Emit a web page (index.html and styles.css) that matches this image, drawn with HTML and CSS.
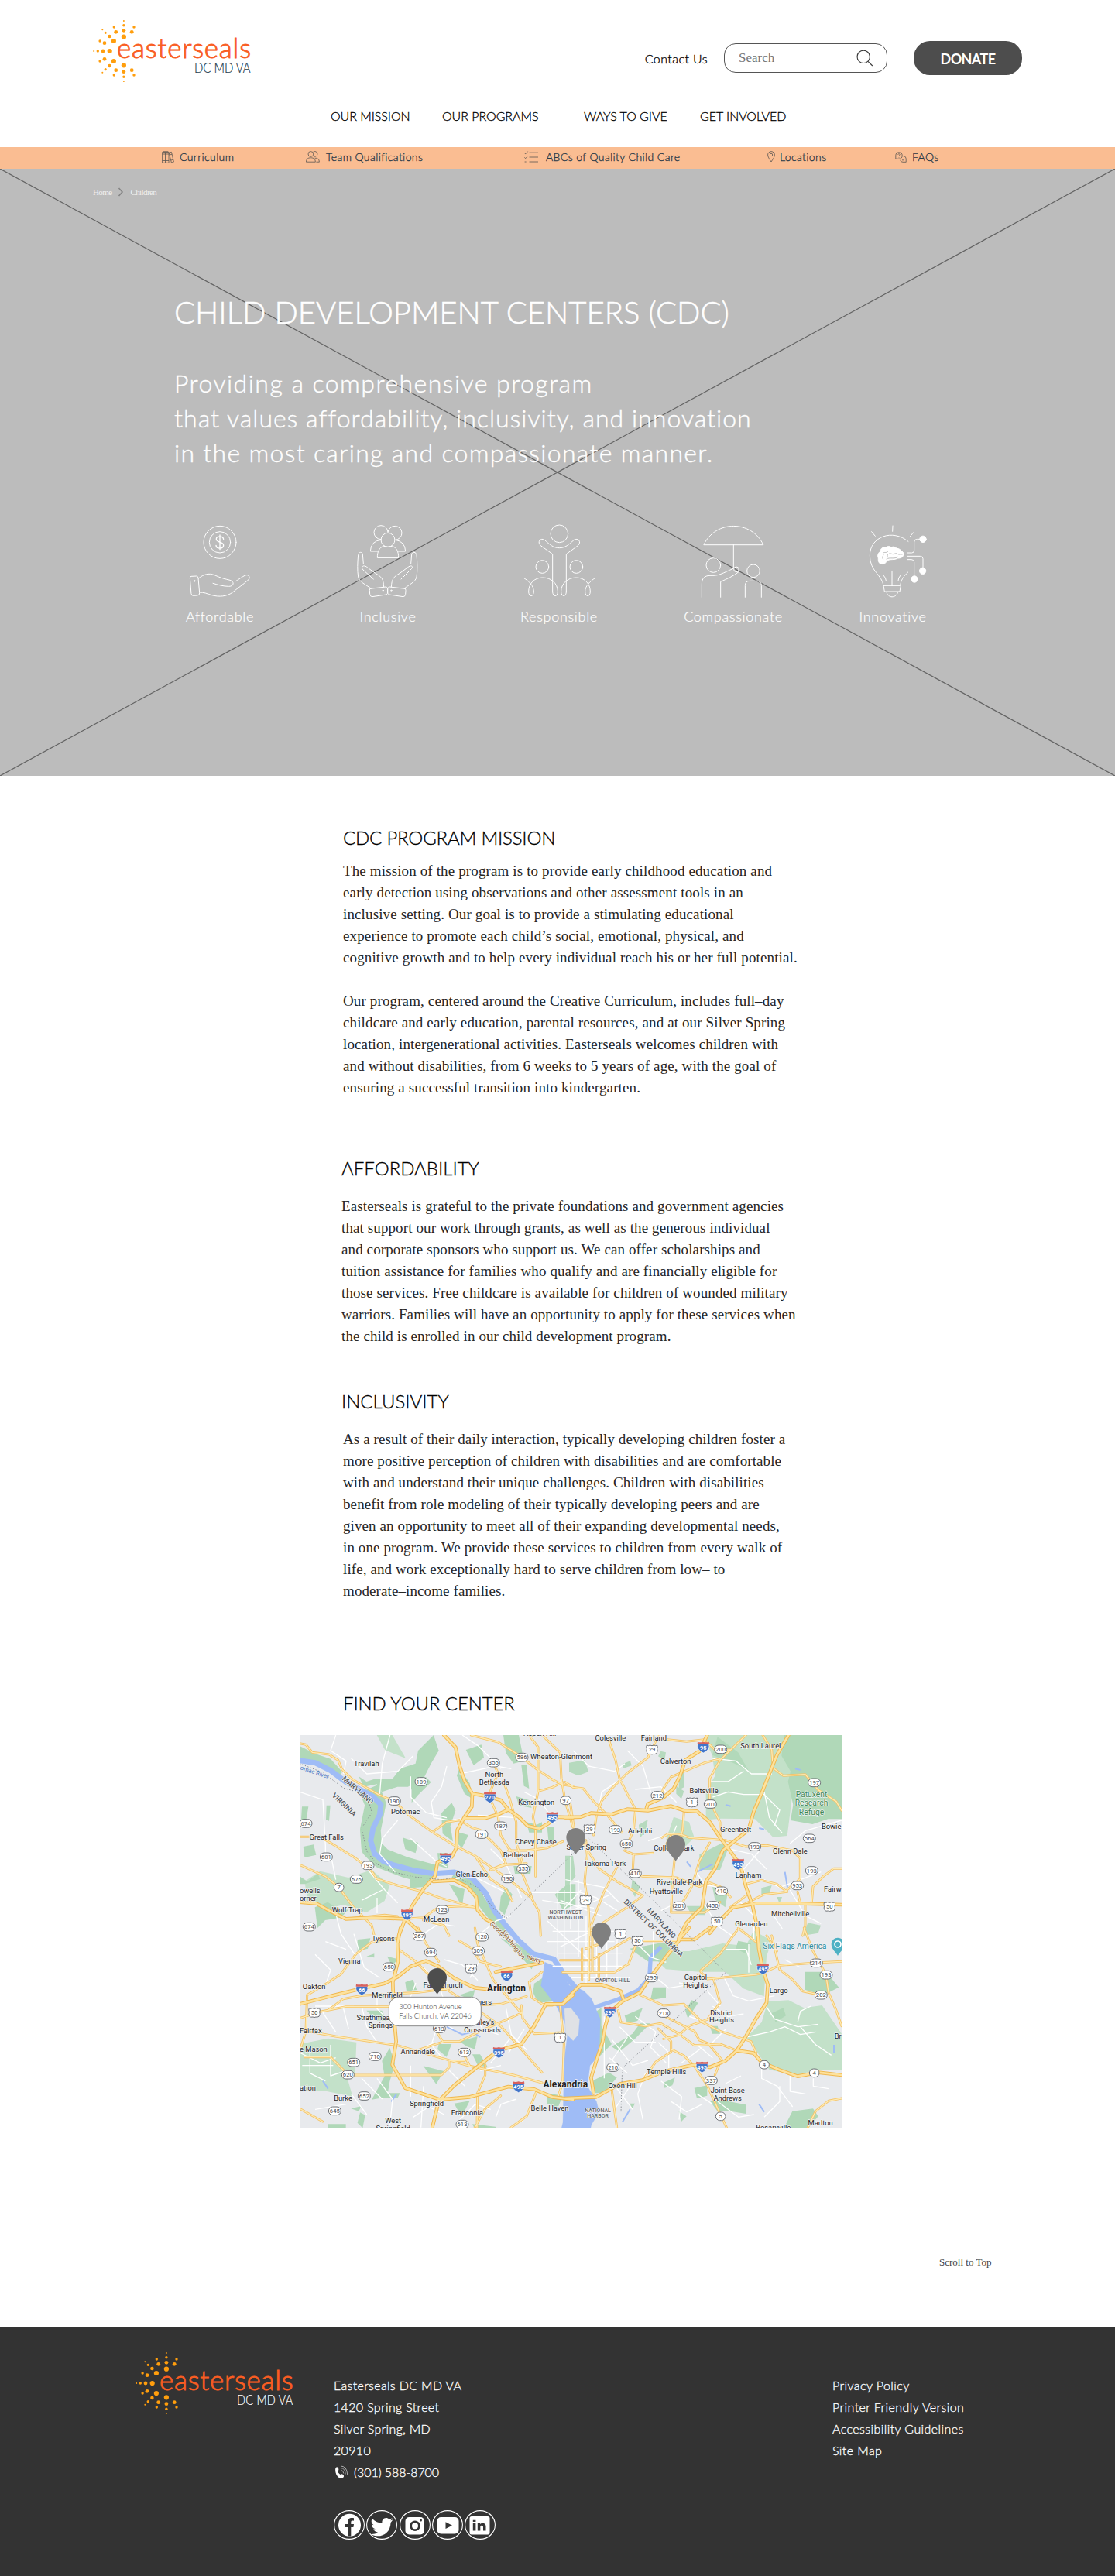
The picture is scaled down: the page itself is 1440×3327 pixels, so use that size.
FILE: index.html
```
<!DOCTYPE html>
<html lang="en">
<head>
<meta charset="utf-8">
<title>Child Development Centers | Easterseals DC MD VA</title>
<link rel="stylesheet" href="styles.css">
</head>
<body>
<svg class="defs" width="0" height="0" aria-hidden="true">
  <defs>
    <symbol id="logo" viewBox="0 0 204 80">
      <g fill="#ff9e0d">
        <circle cx="39.9" cy="1" r="1"/><circle cx="39.9" cy="6.7" r="1.7"/><circle cx="39.9" cy="13.3" r="2.4"/><circle cx="39.9" cy="21.7" r="3.1"/>
        <circle cx="39.9" cy="79" r="1"/><circle cx="39.9" cy="73.3" r="1.7"/><circle cx="39.9" cy="66.7" r="2.4"/><circle cx="39.9" cy="58.3" r="3.1"/>
        <circle cx="26.9" cy="27" r="3.1"/><circle cx="29.7" cy="15.3" r="2.4"/><circle cx="27.3" cy="9" r="1.7"/>
        <circle cx="26.9" cy="53" r="3.1"/><circle cx="29.7" cy="64.7" r="2.4"/><circle cx="27.3" cy="71" r="1.7"/>
        <circle cx="50.2" cy="15.3" r="2.4"/><circle cx="53" cy="9" r="1.7"/><circle cx="50.2" cy="64.7" r="2.4"/><circle cx="53" cy="71" r="1.7"/>
        <circle cx="21.4" cy="21" r="2.3"/><circle cx="16.2" cy="16.3" r="1.6"/><circle cx="12.3" cy="12.3" r="1"/>
        <circle cx="21.4" cy="59" r="2.3"/><circle cx="16.2" cy="63.7" r="1.6"/><circle cx="12.3" cy="67.7" r="1"/>
        <circle cx="15" cy="29.7" r="2.4"/><circle cx="9.1" cy="27" r="1.7"/><circle cx="15" cy="50.3" r="2.4"/><circle cx="9.1" cy="53" r="1.7"/>
        <circle cx="21.7" cy="40" r="3.1"/><circle cx="13" cy="40" r="2.4"/><circle cx="6.3" cy="40" r="1.7"/><circle cx="1.2" cy="40" r="1"/>
      </g>
      <text x="31" y="49" class="logo-name" textLength="173">easterseals</text>
      <text x="131" y="68.4" class="logo-region" textLength="72.5" lengthAdjust="spacingAndGlyphs">DC MD VA</text>
    </symbol>
  </defs>
</svg>

<header class="header">
  <div class="header-top">
    <svg class="logo" width="204" height="80" role="img" aria-label="Easterseals DC MD VA"><use href="#logo"/></svg>
    <div class="tools">
      <a class="contact">Contact Us</a>
      <div class="search">
        <span>Search</span>
        <svg width="22" height="22" viewBox="0 0 22 22" fill="none" stroke="#3a3a3a" stroke-width="1.1"><circle cx="9.2" cy="9.3" r="8.2"/><path d="M15 15.3L20.8 21"/></svg>
      </div>
      <a class="donate">DONATE</a>
    </div>
  </div>
  <nav class="nav">
    <a>OUR MISSION</a><a>OUR PROGRAMS</a><a>WAYS TO GIVE</a><a>GET INVOLVED</a>
  </nav>
</header>

<nav class="subnav">
  <a class="g7"><svg width="16" height="16" viewBox="0 0 16 16"><path d="M.6 1.5h4.2v13.8H.6zM4.8 1.5H9v13.8H4.8zM.6 4h8.4M.6 12.5h8.4M9.2 2.2l3.2-.9 3 12.8-3 .9zM10 5l3.2-.8M11.8 12l3.2-.8M1.3.7h7"/></svg>Curriculum</a>
  <a class="g8"><svg width="18" height="16" viewBox="0 0 18 16"><circle cx="6.4" cy="4" r="3.4"/><path d="M9.6 1.1a3.4 3.4 0 1 1 .8 6M.5 14.2c0-3.5 1.8-5.4 5.9-5.4s5.9 1.9 5.9 5.4zM11.5 9.2c3.6-.3 5.9 1.5 5.9 5h-4"/></svg>Team Qualifications</a>
  <a class="g10"><svg width="18" height="16" viewBox="0 0 18 16"><path d="M6.5 2.2H18M6.5 8H18M6.5 14H18M.3 2.6l1.5 1.2L4.6.6M.3 8.4l1.5 1.2 2.8-3.2M.6 14h2"/></svg>ABCs of Quality Child Care</a>
  <a class="g6"><svg width="10" height="15" viewBox="0 0 10 15"><path d="M5 14C2.200 9.800.6 7.500.6 5a4.400 4.400 0 0 1 8.800 0C9.400 7.500 7.800 9.800 5 14z"/><circle cx="5" cy="5" r="1.700"/></svg>Locations</a>
  <a class="g7"><svg width="15" height="14" viewBox="0 0 15 14"><path d="M.8 9.500V4.800a4.200 4.200 0 1 1 4.200 4.400H.8zM10 5.600h1.200A3.600 3.600 0 0 1 14.200 9v4.300H10A3.500 3.500 0 0 1 6.600 10.800M3.700 3.800c.2-1.700 2.800-1.400 2.400.1-.2.700-1.100.8-1.100 1.700M5 7v.6M9 10.800h3"/></svg>FAQs</a>
</nav>

<section class="hero">
  <svg class="hero-cross" viewBox="0 0 1440 784" preserveAspectRatio="none" aria-hidden="true"><path d="M0 0L1440 784M1440 0L0 784"/></svg>
  <div class="breadcrumb">
    <a>Home</a>
    <svg width="8" height="12" viewBox="0 0 8 12"><path d="M1.500 1L6 6l-4.500 5"/></svg>
    <a class="current">Children</a>
  </div>
  <h1>CHILD DEVELOPMENT CENTERS (CDC)</h1>
  <p class="tagline">
    <span class="wide">Providing a comprehensive program</span>
    <span>that values affordability, inclusivity, and innovation</span>
    <span class="mid">in the most caring and compassionate manner.</span>
  </p>
  <ul class="values">
    <li>
      <svg width="80" height="100" viewBox="134 40 240 300">
        <circle cx="254" cy="119" r="63"/><circle cx="254" cy="119" r="41"/>
        <path stroke-width="4" d="M268 107c-2-14-28-14-28 0 0 15 28 8 28 24 0 15-28 15-29 0M254 91v56"/>
        <path d="M138 256q0-4 5-5l20-1q6 0 7 7l5 58q1 9-8 10l-15 1q-8 1-9-7zM171 259c20-16 40-22 62-13 25 12 40 15 60 20 18 5 16 24-4 24-22 0-42-6-62-12M312 272c14-8 26-18 40-25 14-5 21 8 13 17-20 18-45 35-63 50-22 15-50 18-80 10-18-6-28-11-47-11"/><circle cx="156" cy="269" r="2.500"/>
      </svg>
      <span>Affordable</span>
    </li>
    <li>
      <svg width="80" height="100" viewBox="783 40 240 300">
        <circle cx="903" cy="110" r="27"/><path d="M876 108a27 27 0 1 1 27-27 27 27 0 1 1 29 29M876 110q-40 4-41 44h30M932 110q38 6 39 44h-30M862 178c0-25 8-38 24-44q16 6 34 0c16 6 24 19 24 44z"/>
        <path d="M808 202l-3-36c-2-12-16-10-17 2-3 30-4 60 0 85 3 20 30 30 49 45M847 262l-40-36c-12-13 3-20 13-12l34 25c25 14 32 22 33 53M834 299l60-7c8 0 8 6 8 15s0 13-6 15l-54 8q-8 0-9-10l-1-14q0-6 2-7z"/>
        <path d="M992 202l3-36c2-12 18-10 19 2 3 30 4 60 0 85-3 20-30 30-47 45M954 262l36-36c16-13 3-20-7-12l-34 25c-25 14-31 22-33 53M970 299l-60-7c-8 0-8 6-8 15s0 13 6 15l54 8q8 0 9-10l1-14q0-6-2-7z"/><circle cx="884" cy="306" r="2"/><circle cx="916" cy="306" r="2"/>
      </svg>
      <span>Inclusive</span>
    </li>
    <li>
      <svg width="82" height="100" viewBox="1443 40 246 300">
        <circle cx="1567" cy="86" r="34"/>
        <circle cx="1501" cy="214" r="25"/><circle cx="1633" cy="214" r="25"/>
        <path d="M1541 165l-46-33c-16-14 0-32 15-22 20 18 34 31 57 31s37-13 57-31c15-10 31 8 15 22l-45 33v145"/>
        <path d="M1430 258c20 12 38 30 38 52 0 22-20 22-20 0 0-30 22-54 54-54s58 20 59 54c0 22-20 22-20 0V165M1594 310c0 24-20 20-20 0 0-30 24-54 59-54 32 0 54 24 54 54 0 22-20 22-20 0 0-22 20-40 38-52"/>
      </svg>
      <span>Responsible</span>
    </li>
    <li>
      <svg width="80" height="100" viewBox="562 40 240 300">
        <path d="M568 128c45-96 185-96 230 0zM683 128v90"/>
        <circle cx="605" cy="208" r="28"/><circle cx="760" cy="230" r="25"/><circle cx="694" cy="224" r="10"/>
        <path d="M560 332v-50c0-22 10-34 32-34 34 2 46-8 92-28M633 332v-60c22-10 50-22 70-38M728 332v-45q0-18 18-18h26q19 0 19 18v45"/>
      </svg>
      <span>Compassionate</span>
    </li>
    <li>
      <svg width="80" height="100" viewBox="1180 40 240 300">
        <path d="M1360 116c-60-50-149-20-149 55 0 60 48 75 53 116h65c2-18 10-34 30-52M1264 287l4 23h59l4-23M1276 312c4 25 38 25 44 0M1297 230v58M1264 247q10 10 10 20M1330 247q-9 10-9 20M1299 77l1-22M1232 95l-14-17M1366 98l14-17M1356 160h18q9 0 9-10v-32q0-11 12-11h20M1356 173h50q11 0 11 10v45M1356 186h16q11 0 11 10v60"/>
        <g fill="#fff"><circle cx="1417" cy="107" r="12.500"/><circle cx="1416" cy="230" r="12.500"/><circle cx="1384" cy="262" r="12.500"/>
        <path d="M1244 180c-6-12 2-22 8-26 0-12 12-18 22-15 8-8 18-4 20 0 10-6 18 0 22 4 10 0 14 6 16 9 10 4 14 14 8 20-4 8-14 9-20 9-12 8-30 2-40 8-8 4-4 12-16 14-16 4-22-8-20-23z"/></g>
        <path stroke="#bcbcbc" d="M1262 184c-6-10 6-14 0-24 8-4 14 2 20-6M1280 176c-4-10 6-16 16-12s14-6 22 0 14-2 18 2M1276 184c12-8 30 2 44-8"/>
      </svg>
      <span>Innovative</span>
    </li>
  </ul>
</section>

<main class="content">
  <section class="block mission">
    <h2>CDC PROGRAM MISSION</h2>
    <p>The mission of the program is to provide early childhood education and<br>early detection using observations and other assessment tools in an<br>inclusive setting. Our goal is to provide a stimulating educational<br>experience to promote each child’s social, emotional, physical, and<br>cognitive growth and to help every individual reach his or her full potential.</p>
    <p>Our program, centered around the Creative Curriculum, includes full–day<br>childcare and early education, parental resources, and at our Silver Spring<br>location, intergenerational activities. Easterseals welcomes children with<br>and without disabilities, from 6 weeks to 5 years of age, with the goal of<br>ensuring a successful transition into kindergarten.</p>
  </section>
  <section class="block afford">
    <h2>AFFORDABILITY</h2>
    <p>Easterseals is grateful to the private foundations and government agencies<br>that support our work through grants, as well as the generous individual<br>and corporate sponsors who support us. We can offer scholarships and<br>tuition assistance for families who qualify and are financially eligible for<br>those services. Free childcare is available for children of wounded military<br>warriors. Families will have an opportunity to apply for these services when<br>the child is enrolled in our child development program.</p>
  </section>
  <section class="block include">
    <h2>INCLUSIVITY</h2>
    <p>As a result of their daily interaction, typically developing children foster a<br>more positive perception of children with disabilities and are comfortable<br>with and understand their unique challenges. Children with disabilities<br>benefit from role modeling of their typically developing peers and are<br>given an opportunity to meet all of their expanding developmental needs,<br>in one program. We provide these services to children from every walk of<br>life, and work exceptionally hard to serve children from low– to<br>moderate–income families.</p>
  </section>
  <section class="find">
    <h2>FIND YOUR CENTER</h2>
    <svg class="map" width="700" height="507" viewBox="0 0 2100 1521" role="img" aria-label="Map of centers around Washington, DC">
      <rect width="2100" height="1521" fill="#e8eaed"/>

      <!-- parks and fields -->
      <g transform="translate(-21 -33)">
        <g class="park"><path d="M320 33h60l52 90-80-32zM40 600l60-40 110 25 90-30 70 60-20 60-70 45-90-30-80 20-60-50z"/></g>
        <g class="wood">
          <path d="M21 75l60 30 60 20 45 50-10 20-80-50-75-10zM540 33l-60 60-10 50-60 20-30 40-70 0-30 10-30-20 20 40 50-10 20 30 60-20 40 0 60-30 30-60 30-50z"/>
          <path d="M440 215l70-20 20 20-50 50-25 30 0-50zM640 160l40 60 10 60-30-20-30-70zM665 90l60-20 10 50-40 30zM810 33l60 0 20 100-40 10-30-40zM125 305l15 0-5 60-12-5zM30 310l25 0-10 60-20 20zM35 465l40-8 10 40-45 10z"/>
          <path d="M570 335l40-40 15 30-20 60 10 60-40-30zM640 410l35 10-25 50-20-20zM420 430l60 20-10 40-40-15zM880 150l20 0 10 90-20-10zM900 370l40 10 20-10 0 40-50 0zM450 585l90-5-20 40-70 5zM600 610l60 20-10 70-20-40zM1010 650l50-40 30 0 0 80-50 20zM850 540l70 0-5 30-60 0zM860 270l50 15 10 30-50-10zM980 390l25 0 0 60-20-10zM80 700l50-20 30 20 50 10-30 30-60 10-30 30zM21 580l30 20 40-30 10 20-60 20-20 0zM555 490l40 0 0 60-35-10zM800 660l20-40 25 30-30 80-20-20z"/>
          <path class="bank" d="M290 240L315 300L295 400L300 470L340 510L430 545L540 575"/><path class="bank thin" d="M620 570L690 620L740 700L830 810"/>
        </g>
      </g>
      <g transform="translate(1029 -33)">
        <g class="park"><path d="M540 33h330l30 120-20 110-20 160-55 5-70-70-130-2-60 5 0-110 35-60-10-80-20-40zM420 350l60 20 20 60-60 60-50-50z"/></g>
        <g class="wood">
          <path d="M848 33h230v325l-60 0-60 20-85-15 10-60-20-90 10-40-35-60z"/><path d="M520 495l100-50 10 30-30 80-80 0zM15 140l60-10 15 45-40 15-35-15zM222 145l30-12 5 18-35 12zM370 95l20 5-5 30-25-15zM440 180l20-5 0 60-20 10zM430 230l30 20-10 30-20-20zM285 380l35-20-10 50-20 20zM550 480l40 10-20 30zM0 500l30 0 10 80-40 50zM260 590l30 30-20 40-15-30zM570 620l60 20-10 60-40-30zM760 625l40-10-10 35-30 0zM470 695l90 0-20 35-50 0zM940 760l50 10-10 30-60 10zM820 660l20 0-10 25zM590 40l80 60 40 70-60-30-80-30z" opacity=".9"/>
        </g>
      </g>
      <g transform="translate(-21 747)">
        <g class="park"><path d="M21 450l110-22 110 15-5 120-30 20 20 70-100-20-105 0z"/></g>
        <g class="wood">
          <path d="M245 45l50-5-10 40-40 10zM930 215l45-30 40 40-15 60-55 5-20-40zM430 210l30-10 15 40-40 5zM560 450l50 0-20 50-35-30zM370 465l20 60-20 70-10 60-60 10 50-90-10-60zM500 535l80 20-30 50zM640 440l70-20-10 50-30-10zM690 490l30 0 30 50-40-10zM280 320l60 0 20 40-40 0zM640 260l60-20-10 40zM320 640l90 0-10 20-70 0zM255 715l20 10-10 50-20-20zM130 760l70 0 0 20-70 0zM220 700l40-10-10 20zM620 680l60-10-30 60-20-30zM690 760l90 10 0 20-80-10zM800 40l60 20 80 50-20 50-60-70zM280 110l30-10 0 15zM360 110l40 10-20 30zM980 640l60 10-20 50-40-20z"/>
        </g>
      </g>
      <g transform="translate(1029 747)">
        <g class="park"><path d="M480 90l130-30 90 10 30-60 70 40-20 60-10 155-80-30-70-65-100 0-130-10-50-50 60-20zM785 285l80-5 60 30 70-10 76 110v140l-100 0-70 20-110-20-45-65-45-60 60-60z"/></g>
        <g class="wood">
          <path d="M560 670l60 0 80 15 0 35-60-10-50 0zM880 710l80-10 20 30-50 60-90 0zM380 600l45-20-10 30-30 10zM500 620l50-10 0 40-40 10zM800 330l45-20 10 30-40 25zM340 230l50 0 0 40-60 10zM490 280l25 10-40 60-10-30zM230 340l70-30-20 50-40 10zM90 480l20-150 30-20 0 70 40 70-50 50zM110 590l60-30 30 20-50 60-50 0zM180 460l80-50 30-40 40 0-60 60-60 50zM930 170l80 0 50 60-60 30-70-20zM560 380l30 0 10 30-30 0zM250 80l110-20 60 0-50 70-50 0zM670 50l50 10-20 40-40-20zM250 680l20 0-10 20zM440 710l30 20-20 20z"/>
        </g>
      </g>

      <!-- rivers -->
      <g class="water">
        <path d="M-10 97l70 10 60 30 60 45 60 32 45 25 30 30-5 40-25 50-10 50 15 50 35 30 40 15 75 20 80 12 80-5 65 20 55 60 35 70 40 52 50 60 60 55 80 20 40 60 70 80" fill="none" stroke-width="21" stroke-linejoin="round"/>
        <path d="M950 880l50 20 45 70 55 20 30 30 35 80-5 140-35 40-10 80 35 60 10 40-30 50-15 71h-115l20-80 5-240 15-120-45-90-60-80z" fill="#9fbcf6"/>
        <path d="M1140 1055l90-30 80-35 45-50 5-80 40-40" fill="none" stroke-width="16"/>
        <path d="M570 1130l60 30 40-10 30 20M375 1390l-20 30M90 1340l20 30M1880 530l10 60M1500 490l15 20M1650 270l20 5M1540 530l60-30M1250 1500l30-50M1780 1430l20 30M2070 1200l0 30M1920 130l20 5M1780 360l20 5" fill="none" stroke-width="6"/>
        <path d="M1025 1060l25-5 35 45-5 60-20 25-30-30z" fill="#dfe1e5" stroke="none"/>
      </g>

      <!-- local streets -->
      <g class="street">
        <path d="M140 0l-20 60 60 40-10 50M350 0l-30 110-10 120M0 220l90 30 10 180 0 40M200 90l60 60 120-10 60-60M430 160l0 80 60 60 80 20M570 120l-20 80-40 60 10 60 60 10 80-10M620 150l140-30 60 10M690 310l150 10M380 330l-60 70-10 60 60 70M430 400l100 90 40 20M230 480l100 120 50 50M120 460l20 100M560 560l120-10 120 60M870 220l60 30 60 90M740 440l60 60 60 130M240 640l80-40M300 690l0-60M630 0l60 40 90 90M60 650l80 40 20 80 60 90M480 770l60-40 60 10M700 770l60-50 60-20"/>
        <path d="M1060 60l60 60 100 20 40-30M1160 280l10-60 60-40M1270 60l60 60 30 100M1300 210l100-10 60 60M1600 90l90 10 60 50 80 0M1590 180l70 0 60-40M1600 240l60-20 60 10 80 0 60 60-20 60M1800 220l20 100 50 60M1460 350l-30 80 40 50M1350 410l60-20M1660 440l90 20 60 60M1530 520l40 60 60 10M1780 450l-60 70 20 80M1800 560l60 30 160-60M1900 420l60-50 140-40M1050 420l0 330M1030 560l150 30 60 60M1010 640l160 60M1000 700l200-80M1400 680l60-30M1560 640l60 100 60 40M1700 640l60 60 0 100M1830 690l40 60M1900 600l60 100 60 30"/>
        <path d="M1000 600v260M1025 600v280M1080 560v300M1110 700v260M1150 760v180M1190 800v150M1230 780v140M960 720l170 160M980 760h280M960 800h260M1000 845h250M980 895h290M1050 940h230M1090 965h140M1300 800l60 60 60 20M1370 760l0 100M940 640l200 30M900 610h190l60 20 80 50M1000 700l90-100M1010 820l120-60"/>
        <path d="M60 850l60 60-20 60M100 800l80 30M210 770l40 130 60 40M300 1000l0 60 60 60M170 1060l20 80M60 1050l150 0M80 1060l60 90M240 1050l20 80 40 60M450 960l-30 80M480 900l60 70 20 60M560 870l70 20 60 60M700 870l-40 70M600 1040l40 60M500 1050l40 60 60 30M560 1260l-50-60 20-60M450 1230l70-40M660 1060l50 80 60 20M800 1060l20 100 60 60M870 1140l-60 90M740 1270l80-100M700 1300l80-20M580 1300l60 60M430 1280l0 120M480 1360l-10 160M300 1330l60 80-10 100M240 1330l80 80M200 1390l60 80M0 1230l80 40 60-20M40 1210l0 100 60 30M10 1280l120 0M120 1200l0 120 60-20M60 1450l120-20M440 1480l60-40 60 30M620 1490l60-60 60 20M860 1500l40-60M760 1480l20-50 60-20"/>
        <path d="M1300 1090l80 60-20 60 60 60M1240 1130l60 60 80 0M1180 1090l0 240M1210 1180l80 100 60-20M1200 1250l70 60M1270 1170l-60 90M1340 1310l-30 80 20 100M1230 1370l60 80M1280 1360l-60 90M1430 1290l0-60-40-40M1480 1270l80-60M1590 1200l60-60M1510 1090l60 20M1600 1050l60 40 60-10M1540 1200l60 50M1370 930l60 50 60-10M1470 960l100 20 60 70M1640 930l40 80 60 20 100-20M1650 830l80 0 20 60M1740 810l0 110M1880 870l60 30M1800 1040l40 60 90 30 80-10M1730 1170l90-20 60-20 60 30 60-10M1930 1110l10-40 40-20M1940 1130l60 70 60 40M1790 1270l0 60 60 30 60 80M1900 1320l0 60 60 10M1990 1330l0 30 60 10M1800 1480l60-60 0-60M1650 1350l60-30M1620 1420l80 60 60-10M1540 1390l60 40M1440 1420l60 40 60-30M1400 1340l80 60-10 90"/>
      </g>

      <!-- arterial roads: the casing is drawn first, the core is the same geometry on top -->
      <g class="road-casing"><g class="roads" id="arterials">
        <g transform="translate(-21 -33)"><path d="M21 65l24 5 25 30 65 8 35 22 15 35 35 35 40 25 70 40 60 25 50 50 90 65 90 55 80 40 70 50 60 40 90 75 30 55 5 90M20 427h80l40 23 90 55 35 25 35 30 20 30 80 25 100 25 70 25 130 35M21 535l99 45 50 40 60 80 70 70 10 40M540 405l50-35 50-8 50 30 30 8 40 40 40 40 20 50-60 25M685 33l105 27 80 50 70 55 60 40 40 20 40 5M910 33l35 47v170l-20 100 10 50v180M960 33l70 67 5 100 15 90 30 100M755 270l35 80 10 70 30 50 40 40 10 50 40 100M810 210l25 70 25 90v80l25 80M760 250l30-70-20-40M945 250l55-15 40-20M830 480h70l80-10 60-25M760 555l60-20 80-5M700 500l60 90 60 40 25 45M200 745l100-10 50-5 50 5M430 745l70-5 60-40 90-5 50 5M500 750l80 20 20 40"/></g>
        <g transform="translate(1029 -33)"><path d="M360 33l-20 47-20 40-80 60-60 60-40 50-20 60-10 70M170 55l25 75 15 70 30 60 32 60-7 80-30 70M0 215l30 20 40 5 40 50 50 50 60 70M700 33L600 130l-40 70v90l40 80v60M600 125l-60 15-70 30-60 25-30 45-10 35M395 50l75 8 70-8M550 60l30 30h60M765 33l35 57 5 70 40 30 85-5 50 60 70 45 21 35M460 325l-5 75-30 100-10 100-5 120M375 430l25-15 50 3 30 12 140 10 80 25 80-5 100 20 30 30v80l-60 50M270 570l30 10 130 5 90 35 40-15 40 15 40 40M560 450l-40 70-30 100-35 60M700 610l60-15 60 15 40 30-90 10-80 40M1071 550l-31 0-40 30-40 40-5 60M230 480l35 15 75-5M265 495l-3 55M20 300l15 100 65 100 30 50 70 50 100 55-60 45-140 90M80 440l5 60-10 100 15 100 5 110M200 545l-50 95-50 130M410 720h130l60-40M900 640l10 40M930 690l0 80-10 40M640 700l60-45M410 420l-30 60"/></g>
        <g transform="translate(-21 747)"><path d="M405 40L300 55l-60 45-60 80-70 45-60 35-5 140-24 80M21 350l79-25 100-20h185l315-5 100-5 100-30M130 320l60-45 72-13 218-12 120-15M21 395l139 25 240 35 120 35 160 45 170 35 110 30M40 500h100l70 70h360l30-30 0-25 60 0M460 480l120-40h60l80-40 160-70M400 80l70 50 90 90 80 50 160 110 160 180M480 0l30 60 50 70M640 50l50 30 30 50 80 20M960 170l-50 40 10 60 50 30h30M1030 300l15 150-5 150-20 60M710 640l-2 133M740 530l0 40-30 70M880 300l5 50 45 60 110-5M21 700l89 50M940 630l-40 100-60 43M800 650l-60 50-40 73M545 390l30 50M700 0l10 60 60 140 50 60 60 70M680 535l-30-60"/></g>
        <g transform="translate(1029 747)"><path d="M-20 125h120M-10 172h200l55-32 35-90M65 80v120M92 0v200M105 0v170M80 80l60-20M110 120L250 40M130 100v110M290 260l90 40 80-5 70 70 70 35 120 40 20 45M205 320l10 45 95 15 60-10 70 40 60 45 100-5 65 25M525 170l25 28 190-18 25-5 65-30 140-10 101-5M525 165l75-65 65-90M575 200l25 90-50 65-70 25-40 35-60 15M360 390l50 50v40l-60 40-50 70M410 470l50 25 40 40 50 75 50 110 25 53M560 455l50 60M390 345l110 55 20 35 40 15M800 30l30 130 50 40 40 45 70 15M925 0l35 90 50 90 10 70 30 70 21 60M180 625l10 75 10 73M940 773l30-63 50-40 51-10M780 30l40 60M670 0l70 55M600 520l-20 50M280 50h160"/></g>
      </g></g>
      <use href="#arterials" class="road-core"/>

      <g class="motorway-casing"><g class="roads" id="motorways">
        <g transform="translate(-21 -33)"><path d="M580 33l45 47 15 70 20 60 30 50 50 8 60 17 30 37 40 28 35 35 45 10 35-20 25-25 70 2M690 260l-2 50-28 40-28 50-4 70-18 35-55 20-10 55-45 50-40 60-30 55-25 65M660 355h80l50-15 40-18M540 600l80-5 50 25 35 40 5 50 30 35 30 15M20 680l65 5 45 25 70 35 100-5 130 5 60 55"/></g>
        <g transform="translate(1029 -33)"><path d="M0 352l60-2 40-15 80 5 60-20 80 5 90-17 50 17 50 3 50 42 40 60 45 60 35 50 20 80 25 70 15 70 5 50M550 33l-30 62-55 35-20 60-25 50-40 35-60 25-5 15M865 33l-45 77-20 50-40 100-30 70-20 70-50 40-50 40-30 70-35 50-15 100-60 60-30 60M1071 690l-171-5H740l-90 15-50 50-40 50"/></g>
        <g transform="translate(-21 747)"><path d="M21 295l129-33 110-27 90-20 50-25 50-40 60-22 50 22 60 45 80 37 60 6M412 0l-12 60 2 70-20 80 3 120 10 110-15 90 50 90 135 45 115-10 150-40 100 10 70 30 80 10M535 773l25-103 60-60 100-80 70-55 90-25 50-70 45-85h65l40-35M780 170l50-10 130-25"/></g>
        <g transform="translate(1029 747)"><path d="M745 0l5 80 15 80 20 60-5 70-40 60-40 70-35 55-45 40-60 25-60-10-70 15-60 15-70 30-90 15-90 50-120 5M440 50l-40 50-70 90-40 60-70 35-50 45-15 50-10 60-20 60-25 80 10 60M480 0l-40 45 60 0 60-45M665 475l65 10 30 35 70 30 70 25 80-15 91 10M0 280l60-60h80l75 25 10 30"/></g>
      </g></g>
      <use href="#motorways" class="motorway-core"/>

      <g class="border"><path d="M0 110l90 35 80 60 90 25 20 70-40 60 20 90 40 50 60 30 90 20 100 10 60-10 80 40 60 80 50 40 320-310 270 260 260 260-400 370-5 171"/></g>

      <g id="shields"></g>
      <g id="labels"></g>

      <g class="pins">
        <path fill="#7f7f7f" transform="translate(1070 462)" d="M0 0C-6-14-37-36-37-65a37 37 0 1 1 74 0C37-36 6-14 0 0z"/>
        <path fill="#7f7f7f" transform="translate(1457 489)" d="M0 0C-6-14-37-36-37-65a37 37 0 1 1 74 0C37-36 6-14 0 0z"/>
        <path fill="#7f7f7f" transform="translate(1169 828)" d="M0 0C-6-14-37-36-37-65a37 37 0 1 1 74 0C37-36 6-14 0 0z"/>
        <path fill="#4d4d4d" transform="translate(533 1005)" d="M0 0C-6-14-37-36-37-65a37 37 0 1 1 74 0C37-36 6-14 0 0z"/>
        <path fill="#4db1c4" transform="translate(2085 855)" d="M0 0C-4-12-25-24-25-45a25 25 0 1 1 50 0C25-24 4-12 0 0z"/><circle cx="2085" cy="810" r="12" fill="none" stroke="#fff" stroke-width="5"/>
        <rect x="346" y="1015" width="357" height="112" rx="38" fill="#fff" stroke="#8a8a8a" stroke-width="3"/>
        <text class="tip" x="385" y="1061" textLength="244">300 Hunton Avenue</text>
        <text class="tip" x="385" y="1097" textLength="281">Falls Church, VA 22046</text>
      </g>
    </svg>
  </section>
  <a class="to-top">Scroll to Top</a>
</main>

<footer class="footer">
  <svg class="logo logo-dark" width="204" height="80" role="img" aria-label="Easterseals DC MD VA"><use href="#logo"/></svg>
  <div class="address">
    <p>Easterseals DC MD VA<br>1420 Spring Street<br>Silver Spring, MD<br>20910</p>
    <p class="phone"><svg width="18" height="18" viewBox="0 0 18 18"><path fill="#fff" d="M1.200 4.500Q3-.2 5.200 4.500q.6 2-1 3.300.8 3 3.300 4.200 2-1.500 3.500 0 2 1.800.2 3.800-1.700 2-4.700.6Q.5 12.600 1.200 4.500z"/><path fill="none" stroke="#aaa" d="M8 1q8 0 8.700 11M8 3.500q6 .5 6.200 8M8 6.200q3.500.3 3.800 4.300"/></svg><a>(301) 588-8700</a></p>
    <div class="social">
      <svg viewBox="0 0 42 38"><ellipse cx="20" cy="19" rx="19.400" ry="18.400"/><circle class="f" cx="20.500" cy="19.200" r="14.500"/><path class="k" d="M18 33.500V22h-3.800v-4H18v-3.200c0-3.800 2.500-5.300 8-4.600v3.500c-3-.3-3.700.2-3.700 2V18h3.700l-.6 4h-3.100v11.500z"/></svg>
      <svg viewBox="0 0 42 38"><ellipse cx="20" cy="19" rx="19.400" ry="18.400"/><path class="f" d="M34.500 12.200l-3.200 1.200 2.400-3.100-3.800 1.400c-4.500-4-10.500-.5-9.300 5-5 0-9-2-12.800-5.700-2 3.300-1 6 1.800 8.200l-2.700-.8c.2 3 2 4.900 5 5.900l-2.700.2c1 2.400 3 3.600 5.700 4-2.600 2-5.500 2.600-9.300 2.400 11 6 25.500 1 26-15z"/></svg>
      <svg viewBox="0 0 42 38"><ellipse cx="20" cy="19" rx="19.400" ry="18.400"/><rect class="f" x="7.500" y="9" width="24.500" height="22.500" rx="5"/><circle class="k" cx="20" cy="20.300" r="6.800"/><circle class="f" cx="20" cy="20.300" r="4"/><circle class="k" cx="27.500" cy="13" r="1.500"/></svg>
      <svg viewBox="0 0 42 38"><ellipse cx="20" cy="19" rx="19.400" ry="18.400"/><rect class="f" x="6.500" y="9" width="28" height="21.500" rx="5"/><path class="k" d="M17.500 15.300l8.500 4.400-8.500 4.400z"/></svg>
      <svg viewBox="0 0 42 38"><ellipse cx="20" cy="19" rx="19.400" ry="18.400"/><rect class="f" x="6.500" y="8" width="26" height="23.500" rx="2.500"/><path class="k" d="M10.800 17h3.600v9.600h-3.600zM10.800 12.700h3.600V15h-3.600zM16.800 17h3.400v1.200c2-2.400 7.300-2 7.300 2.600v5.800H24v-5c0-2.500-3.700-2.500-3.700 0v5h-3.500z"/></svg>
    </div>
  </div>
  <nav class="links"><a>Privacy Policy</a><a>Printer Friendly Version</a><a>Accessibility Guidelines</a><a>Site Map</a></nav>
</footer>
<script src="map.js"></script>
</body>
</html>
```
FILE: styles.css
```
* { box-sizing: border-box; }
body { margin: 0; background: #fff; color: #000; font-family: Lato, "Open Sans", sans-serif; font-weight: 300; -webkit-text-stroke: .3px; }
h1, h2, p, ul { margin: 0; padding: 0; font-weight: 300; }
ul { list-style: none; }
.defs { display: block; }

.logo { color: #1c3a4d; -webkit-text-stroke: 0; }
.logo-dark { color: #fff; }
.logo-name { font: 300 35px Lato, sans-serif; fill: #f95d22; stroke: #f95d22; stroke-width: .9; }
.logo-region { font: 300 17px Lato, sans-serif; fill: currentColor; stroke: currentColor; stroke-width: .2; }

.header { height: 190px; padding: 26px 120px 0; }
.header-top { display: flex; justify-content: space-between; height: 80px; }
.tools { display: flex; align-items: center; height: 44px; margin-top: 27px; }
.contact { font-size: 16px; letter-spacing: .44px; margin-right: 21px; }
.search { display: flex; align-items: center; justify-content: space-between; width: 211px; height: 38px; padding: 0 17px 0 18px; border: 1.5px solid #555; border-radius: 15px; margin-right: 34px; color: #777; font: 17px "Liberation Serif", serif; -webkit-text-stroke: 0; }
.donate { width: 140px; height: 44px; border-radius: 21px; background: #4d4d4d; color: #fff; font: 700 18px/46px Lato, sans-serif; letter-spacing: -.6px; text-align: center; -webkit-text-stroke: 0; }
.nav { display: grid; grid-template-columns: 144px 183px 150px auto; padding-left: 307px; margin-top: 32px; font-size: 16px; line-height: 24px; letter-spacing: -.04px; white-space: nowrap; }

.subnav { display: grid; grid-template-columns: 186px 282px 314px 165px auto; align-items: center; height: 28px; padding-left: 209px; background: #fabd92; color: #273746; font-size: 14px; line-height: 24px; letter-spacing: .4px; }
.subnav a { display: flex; align-items: center; height: 25px; margin-bottom: 4px; white-space: nowrap; }
.subnav svg { fill: none; stroke: #5b5550; stroke-width: .8; }
.g6 { gap: 6px; } .g7 { gap: 7px; } .g8 { gap: 8px; } .g10 { gap: 10px; }

.hero { position: relative; height: 784px; background: #bcbcbc; color: #fff; padding-top: 22px; }
.hero-cross { position: absolute; inset: 0; width: 100%; height: 100%; }
.hero-cross path { stroke: #636363; stroke-width: 1.2; }
.breadcrumb, .hero h1, .tagline, .values { position: relative; }
.breadcrumb { display: flex; align-items: center; gap: 8px; height: 16px; padding-left: 120px; font: 11px/12px "Liberation Serif", serif; letter-spacing: -.6px; color: #f0f0f0; -webkit-text-stroke: 0; }
.breadcrumb svg { fill: none; stroke: #858585; stroke-width: 1.6; }
.current { border-bottom: 1px solid #fff; }
.hero h1 { margin: 123px 0 0 225px; font-size: 40px; line-height: 48px; letter-spacing: .04px; -webkit-text-stroke: .5px; }
.tagline { display: flex; flex-direction: column; margin: 45px 0 0 225px; font-size: 32px; line-height: 45px; letter-spacing: 1.04px; -webkit-text-stroke: .4px; }
.wide { letter-spacing: 1.48px; }
.mid { letter-spacing: 1.31px; }
.values { display: grid; grid-template-columns: 217px 221px 225px 206px 130px; margin: 67px 0 0 219px; font-size: 18px; line-height: 24px; letter-spacing: .7px; -webkit-text-stroke: .2px; }
.values li { display: flex; flex-direction: column; align-items: center; width: 130px; }
.values svg { overflow: visible; fill: none; stroke: #fff; stroke-width: 3; stroke-linecap: round; stroke-linejoin: round; margin-bottom: 10px; }

.content { height: 2004px; padding: 66px 0 0 387px; }
.content h2 { font-size: 24px; line-height: 28px; letter-spacing: -.2px; }
.block { padding-left: 54px; white-space: nowrap; }
.block p { font: 19px/28px "Liberation Serif", serif; letter-spacing: .13px; color: #262626; -webkit-text-stroke: 0; }
.content .mission { padding-left: 56px; }
.mission h2 { margin-bottom: 15px; }
.mission p + p { margin-top: 28px; }
.afford { margin-top: 76px; }
.afford p { letter-spacing: .11px; }
.content .afford h2, .content .include h2 { margin-bottom: 21px; letter-spacing: 0; }
.include { margin-top: 56px; }
.include p { padding-left: 2px; letter-spacing: .1px; }
.find { margin-top: 117px; }
.content .find h2 { padding-left: 56px; letter-spacing: -.1px; }
.map { display: block; margin-top: 27px; -webkit-text-stroke: 0; }
.to-top { display: block; margin: 166px 0 0 826px; font: 13px/16px "Liberation Serif", serif; color: #444; -webkit-text-stroke: 0; }

.park path { fill: #c3e1c9; }
.wood path { fill: #b0d8b8; }
.wood .bank { fill: none; stroke: #b0d8b8; stroke-width: 80; stroke-linejoin: round; }
.wood .thin { stroke-width: 34; }
.water path { stroke: #9fbcf6; }
.street path { fill: none; stroke: #fff; stroke-width: 4; stroke-linejoin: round; }
.roads path { fill: none; stroke-linejoin: round; stroke-linecap: round; }
.road-casing { stroke: #f4c468; stroke-width: 9; }
.road-core { stroke: #fdeab5; stroke-width: 4; }
.motorway-casing { stroke: #f0b84f; stroke-width: 14; }
.motorway-core { stroke: #fde29d; stroke-width: 8; }
.border path { fill: none; stroke: #85898f; stroke-width: 3; stroke-dasharray: 4 7; }
.lbl { font: 400 28px Roboto, sans-serif; fill: #222; text-anchor: middle; stroke: #f1f2f4; stroke-width: 4; paint-order: stroke; }
.lbl.start { text-anchor: start; }
.lbl.end { text-anchor: end; }
.lbl.big { font-size: 36px; font-weight: 700; }
.lbl.state { font-weight: 500; fill: #55585e; }
.lbl.area { font-size: 21px; font-weight: 500; fill: #5f6368; }
.lbl.green { font-size: 31px; fill: #3f8a57; }
.lbl.fun { font-size: 31px; fill: #2e8ea0; }
.lbl.pkwy { font-size: 25px; fill: #8a5a2a; }
.lbl.river { font-size: 23px; fill: #4474c4; stroke: none; text-anchor: start; }
.sh { font: 400 23px Roboto, sans-serif; fill: #45484d; text-anchor: middle; }
.sh.int { font-size: 22px; font-weight: 700; fill: #fff; }
.tip { font: 300 28px Lato, sans-serif; fill: #333; }

.footer { display: flex; height: 321px; background: #333; color: #fff; padding: 32px 0 0 175px; font-size: 16px; line-height: 28px; letter-spacing: .34px; }
.address { width: 644px; padding-top: 29px; margin-left: 52px; }
.phone { display: flex; align-items: center; gap: 7px; padding-left: 1px; letter-spacing: -.1px; }
.phone a { text-decoration: underline; text-decoration-color: #aaa; }
.social { display: flex; gap: .3px; margin-top: 35px; }
.social svg { width: 42px; height: 38px; fill: none; stroke: #fff; }
.social ellipse { stroke-width: 1.1; }
.social .f { fill: #fff; stroke: none; }
.social .k { fill: #333; stroke: none; }
.links { display: flex; flex-direction: column; padding-top: 29px; letter-spacing: .42px; }
```
FILE: map.js
```
// Route shields and place names, in map units (three per CSS pixel).
const NS = 'http://www.w3.org/2000/svg';
const add = (parent, tag, attrs, text) => {
  const el = document.createElementNS(NS, tag);
  for (const k in attrs) el.setAttribute(k, attrs[k]);
  if (text) el.textContent = text;
  parent.appendChild(el);
};
const routes = [
  [751,107,'355'],[861,86,'586'],[471,180,'189'],[367,255,'190'],[1031,253,'97'],[779,352,'187'],[705,384,'191'],[866,518,'355'],
  [806,556,'190'],[264,505,'193'],[103,472,'681'],[220,558,'676'],[152,590,'7'],[24,342,'674'],[37,743,'674'],[553,676,'123'],
  [1631,55,'200'],[1386,234,'212'],[1591,267,'201'],[1994,184,'197'],[1223,366,'193'],[1266,421,'650'],[1763,432,'193'],[1975,400,'564'],
  [1300,536,'410'],[1984,525,'193'],[1928,583,'953'],[1634,604,'410'],[1602,660,'450'],[1471,662,'201'],
  [463,779,'267'],[508,842,'694'],[692,836,'309'],[346,898,'650'],[541,1137,'613'],[638,1229,'613'],[292,1245,'710'],
  [209,1268,'651'],[187,1316,'620'],[250,1398,'652'],[136,1456,'645'],[630,1508,'613'],[707,782,'120'],
  [1363,940,'295'],[1410,1077,'218'],[2002,883,'214'],[2040,929,'193'],[2020,1007,'202'],[1214,1287,'210'],[1594,1338,'337'],[1800,1277,'4'],[1994,1309,'4'],[1631,1477,'5']
];
const usRoutes = [[1365,56,'29'],[1123,364,'29'],[1520,260,'1'],[1108,639,'29'],[2053,664,'50'],[1617,722,'50'],[1243,770,'1'],[1309,797,'50'],[664,904,'29'],[57,1075,'50'],[1009,1172,'1']];
const interstates = [[737,240,'270'],[979,318,'495'],[566,477,'495'],[416,695,'495'],[1564,46,'95'],[1699,499,'495'],[241,985,'66'],[802,932,'66'],[772,1229,'395'],[848,1362,'495'],[1795,905,'495'],[1202,1072,'295'],[1559,1285,'495']];
const shields = document.getElementById('shields');
for (const [x, y, n] of routes) {
  const w = n.length > 2 ? 48 : n.length > 1 ? 42 : 38;
  add(shields, 'rect', {x: x - w / 2, y: y - 16, width: w, height: 32, rx: 16, fill: '#fff', stroke: '#6d7075', 'stroke-width': 3});
  add(shields, 'text', {x, y: y + 8, class: 'sh'}, n);
}
for (const [x, y, n] of usRoutes) {
  add(shields, 'path', {transform: `translate(${x} ${y})`, d: 'M-20-17q6 4 12 0 8 4 16 0 6 4 12 0 4 8 0 14 4 8-2 18-8 4-12 2-6 3-12 0-8 2-12-2-6-10-2-18-4-6 0-14z', fill: '#fff', stroke: '#6d7075', 'stroke-width': 3});
  add(shields, 'text', {x, y: y + 8, class: 'sh'}, n);
}
for (const [x, y, n] of interstates) {
  add(shields, 'path', {transform: `translate(${x} ${y})`, d: 'M-22-12h44q6 22-22 35-28-13-22-35z', fill: '#4275c9', stroke: '#fff', 'stroke-width': 2});
  add(shields, 'path', {transform: `translate(${x} ${y})`, d: 'M-22-20q11 4 22 0 11 4 22 0l1 9h-46z', fill: '#d8615d'});
  add(shields, 'text', {x, y: y + 10, class: 'sh int'}, n);
}
const places = [
  [259,121,'Travilah'],[754,162,'North'],[754,191,'Bethesda'],[1014,94,'Wheaton-Glenmont'],[917,270,'Kensington'],[410,307,'Potomac'],[104,406,'Great Falls'],
  [915,423,'Chevy Chase'],[847,473,'Bethesda'],[667,548,'Glen Echo'],[0,612,'owells','start'],[0,641,'orner','start'],[185,688,'Wolf Trap'],[530,724,'McLean'],[931,4,'Aspen Hill'],
  [1204,22,'Colesville'],[1372,21,'Fairland'],[1457,111,'Calverton'],[1786,51,'South Laurel'],[1566,225,'Beltsville'],[1689,374,'Greenbelt'],[2098,363,'Bowie','end'],
  [1319,381,'Adelphi'],[1111,444,'Silver Spring'],[1450,448,'College Park'],[1900,458,'Glenn Dale'],[1182,507,'Takoma Park'],[1739,552,'Lanham'],[1472,579,'Riverdale Park'],
  [1420,614,'Hyattsville'],[2099,605,'Fairw','end'],[1901,702,'Mitchellville'],[1750,742,'Glenarden'],
  [324,799,'Tysons'],[193,885,'Vienna'],[56,985,'Oakton'],[555,978,'Falls Church'],[339,1017,'Merrifield'],[300,1104,'Strathmeade'],[313,1134,'Springs'],[0,1156,'Fairfax','start'],
  [0,1226,'e Mason','start'],[458,1235,'Annandale'],[695,1045,'Corners'],[708,1122,"Bailey's"],[708,1153,'Crossroads'],[168,1416,'Burke'],[0,1377,'ation','start'],[492,1437,'Springfield'],[649,1472,'Franconia'],
  [362,1503,'West'],[362,1532,'Springfield'],[969,1456,'Belle Haven'],
  [1534,948,'Capitol'],[1534,979,'Heights'],[1856,999,'Largo'],[1635,1085,'District'],[1635,1113,'Heights'],[1421,1314,'Temple Hills'],[1251,1367,'Oxon Hill'],[1658,1386,'Joint Base'],[1658,1415,'Andrews'],
  [1835,1529,'Rosaryville'],[2018,1513,'Marlton'],[2099,1176,'Br','end']
];
const labels = document.getElementById('labels');
const label = (x, y, t, cls = '', rot = 0) => add(labels, 'text', {x: 0, y: 0, transform: `translate(${x} ${y}) rotate(${rot})`, class: 'lbl ' + cls}, t);
for (const [x, y, t, cls] of places) label(x, y, t, cls);
label(801, 992, 'Arlington', 'big');
label(1030, 1365, 'Alexandria', 'big');
label(219, 220, 'MARYLAND', 'state', 41);
label(166, 276, 'VIRGINIA', 'state', 44);
label(1395, 735, 'MARYLAND', 'state', 47);
label(1365, 755, 'DISTRICT OF COLUMBIA', 'state', 44);
label(1030, 692, 'NORTHWEST', 'area');
label(1030, 713, 'WASHINGTON', 'area');
label(1212, 957, 'CAPITOL HILL', 'area');
label(1155, 1460, 'NATIONAL', 'area');
label(1155, 1481, 'HARBOR', 'area');
label(1983, 240, 'Patuxent', 'green');
label(1983, 274, 'Research', 'green');
label(1983, 308, 'Refuge', 'green');
label(1918, 829, 'Six Flags America', 'fun');
label(764, 760, 'George', 'pkwy', 44);
label(822, 818, 'Washington', 'pkwy', 52);
label(905, 876, 'Pkwy', 'pkwy', 12);
label(1, 133, 'omac River', 'river', 18);
```
